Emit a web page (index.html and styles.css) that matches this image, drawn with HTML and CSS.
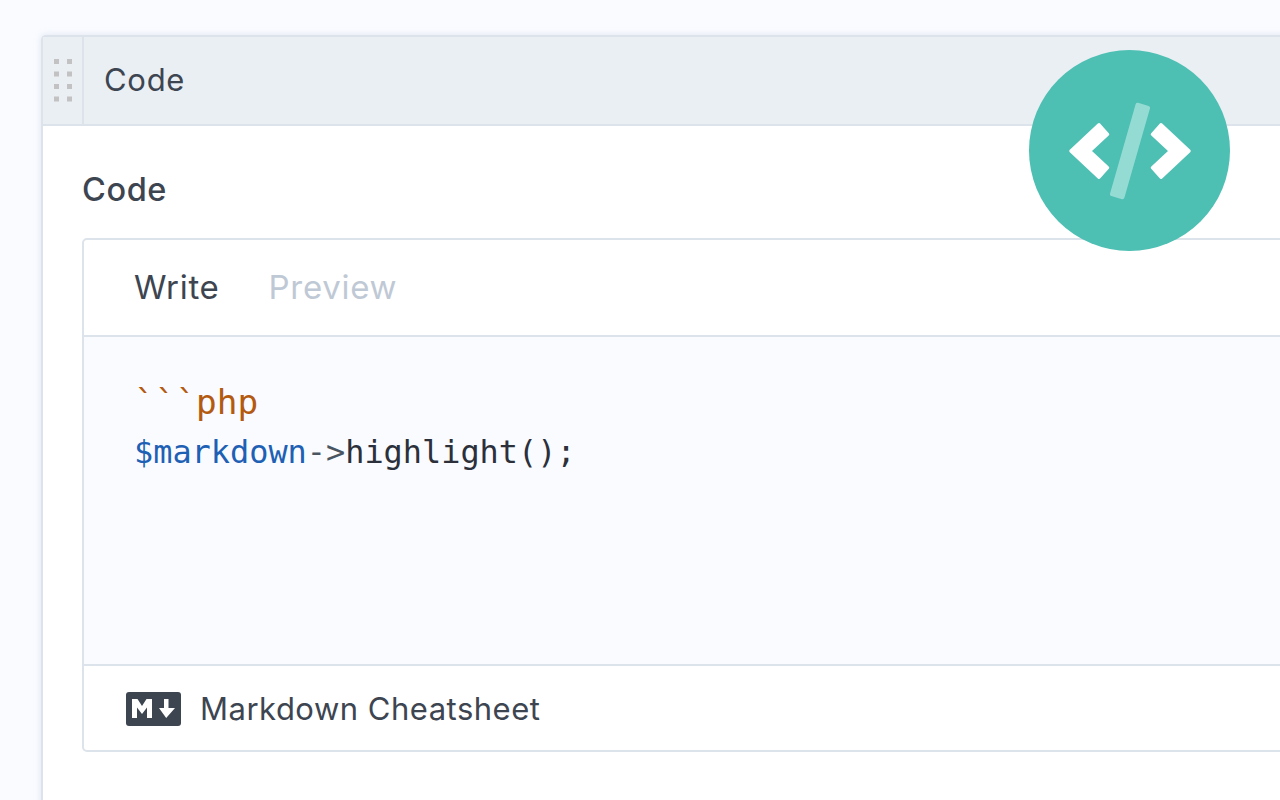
FILE: index.html
```html
<!DOCTYPE html>
<html lang="en">
<head>
<meta charset="utf-8">
<title>Code block</title>
<link rel="stylesheet" href="styles.css">
</head>
<body>
<section class="block">
  <header class="block-head">
    <div class="handle">
      <svg width="18" height="43" viewBox="0 0 18 43" class="grip"><g fill="#c2c2c2"><rect x="0" y="0" width="5" height="5"/><rect x="13" y="0" width="5" height="5"/><rect x="0" y="12.500" width="5" height="5"/><rect x="13" y="12.500" width="5" height="5"/><rect x="0" y="25" width="5" height="5"/><rect x="13" y="25" width="5" height="5"/><rect x="0" y="37.500" width="5" height="5"/><rect x="13" y="37.500" width="5" height="5"/></g></svg>
    </div>
    <div class="block-title">Code</div>
  </header>
  <div class="block-body">
    <div class="field-label">Code</div>
    <div class="editor">
      <div class="tabs">
        <span class="tab tab-active">Write</span>
        <span class="tab tab-muted">Preview</span>
      </div>
      <div class="code">
        <div class="code-line"><span class="c-orange">```php</span></div>
        <div class="code-line"><span class="c-blue">$markdown</span><span class="c-grey">-&gt;</span>highlight();</div>
      </div>
      <div class="editor-foot">
        <svg class="md-icon" width="55" height="34" viewBox="0 0 55 34"><rect width="55" height="34" rx="3" fill="#3d4551"/><path d="M6 26V7h5.500l4.500 7 4.500-7H26v19h-5V15.500L16 22l-5-6.500V26z" fill="#fff"/><path d="M38 7h4.500v9H49l-8.800 10L33 16h5z" fill="#fff"/></svg>
        <span class="foot-text">Markdown Cheatsheet</span>
      </div>
    </div>
  </div>
</section>
<div class="badge">
  <svg width="201" height="201" viewBox="0 0 201 201">
    <circle cx="100.500" cy="100.500" r="100.500" fill="#4dbfb3"/>
    <rect x="93.500" y="52.500" width="15" height="97" rx="2" fill="#94dbd3" transform="rotate(16 101 101)"/>
    <path d="M42 101 70 74.800 78.500 84.300 60.500 101 78.500 117.700 70 127.200z" fill="#fff" stroke="#fff" stroke-width="3.500" stroke-linejoin="round"/>
    <path d="M160 101 132 74.800 123.500 84.300 141.500 101 123.500 117.700 132 127.200z" fill="#fff" stroke="#fff" stroke-width="3.500" stroke-linejoin="round"/>
  </svg>
</div>
</body>
</html>
```
FILE: styles.css
```css
html, body { margin: 0; padding: 0; height: 100%; overflow: hidden; }
body {
  background: #f9fbff;
  font-family: Inter, "Liberation Sans", sans-serif;
  color: #3d4551;
  padding: 35px 0 0 41px;
  box-sizing: border-box;
}
.block {
  width: 1400px;
  height: 900px;
  background: #fff;
  border-radius: 5px 0 0 0;
  border: 2px solid #dde3eb;
  border-right: 0;
  box-sizing: border-box;
  box-shadow: 0 0 6px rgba(200, 210, 225, .5);
}
.block-head {
  display: flex;
  height: 87px;
  background: #eaeff3;
  border-bottom: 2px solid #dde3eb;
}
.handle {
  width: 39px;
  border-right: 2px solid #dde3eb;
  display: flex;
  justify-content: center;
  align-items: center;
  flex: none;
}
.grip { display: block; }
.block-title {
  font-size: 31px;
  letter-spacing: .7px;
  line-height: 86px;
  padding-left: 20px;
}
.block-body { padding: 46px 40px 0 39px; }
.field-label {
  font-size: 32.500px;
  font-weight: 500;
  letter-spacing: .6px;
  line-height: 36px;
  margin-bottom: 30px;
}
.editor {
  width: 1400px;
  border: 2px solid #dde3eb;
  border-radius: 5px;
  background: #fff;
}
.tabs {
  height: 94px;
  padding-bottom: 1px;
  border-bottom: 2px solid #dde3eb;
  display: flex;
  align-items: center;
  gap: 49px;
  padding-left: 50px;
  font-size: 33px;
  letter-spacing: .7px;
}
.tab-muted { color: #bfc9d5; }
.code {
  height: 327px;
  box-sizing: border-box;
  padding-top: 40px;
  background: #f9fbff;
  padding-left: 50px;
  font-family: "DejaVu Sans Mono", "Liberation Mono", monospace;
  font-size: 31.900px;
  line-height: 50px;
  color: #2b303a;
}
.code-line { height: 50px; }
.c-orange { color: #b35a10; font-size: 34.400px; }
.c-blue { color: #1e60b4; }
.c-grey { color: #4a5562; }
.editor-foot {
  height: 84px;
  border-top: 2px solid #dde3eb;
  display: flex;
  align-items: center;
  padding-left: 42px;
  gap: 19px;
  font-size: 31px;
  letter-spacing: .5px;
}
.md-icon { display: block; margin-top: 2px; }
.badge {
  position: absolute;
  left: 1029px;
  top: 50px;
  width: 201px;
  height: 201px;
}
.badge svg { display: block; }
```
